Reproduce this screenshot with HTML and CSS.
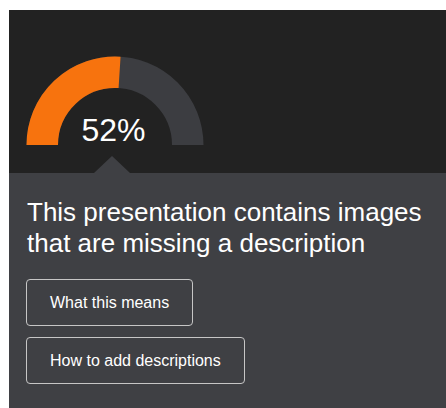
FILE: index.html
```html
<!DOCTYPE html>
<html lang="en">
<head>
<meta charset="utf-8">
<title>Accessibility check</title>
<link rel="stylesheet" href="styles.css">
</head>
<body>
  <div class="panel">
    <section class="score">
      <div class="gauge">
        <svg class="gauge-arc" width="178" height="89" viewBox="0 0 178 89" aria-hidden="true">
          <path d="M16.25 89 A72.75 72.75 0 0 1 161.75 89" fill="none" stroke="#3c3d41" stroke-width="31.5"/>
          <path d="M16.25 89 A72.75 72.75 0 0 1 93.57 16.39" fill="none" stroke="#f7730e" stroke-width="31.5"/>
        </svg>
        <span class="gauge-value">52%</span>
      </div>
      <span class="pointer"></span>
    </section>
    <section class="details">
      <h2 class="headline">This presentation contains images that are missing a description</h2>
      <div class="actions">
        <button class="action" type="button">What this means</button>
        <button class="action" type="button">How to add descriptions</button>
      </div>
    </section>
  </div>
</body>
</html>
```
FILE: styles.css
```css
html, body {
  margin: 0;
  padding: 0;
  background: #ffffff;
  overflow: hidden;
}

body {
  font-family: "Liberation Sans", Arial, sans-serif;
  color: #ffffff;
}

.panel {
  margin: 10px 0 0 9px;
}

/* Dark score area with the half-ring gauge */
.score {
  position: relative;
  box-sizing: border-box;
  height: 163px;
  padding: 46px 0 0 17px;
  background: #222222;
}

.gauge {
  position: relative;
  width: 178px;
  height: 89px;
}

.gauge-arc {
  display: block;
}

.gauge-value {
  position: absolute;
  top: 58px;
  left: 0;
  right: 3px;
  text-align: center;
  font-size: 32px;
  line-height: 32px;
  color: #ffffff;
}

/* Small arrow pointing from the details card up to the gauge */
.pointer {
  position: absolute;
  left: 85px;
  bottom: 0;
  width: 0;
  height: 0;
  border-left: 18px solid transparent;
  border-right: 18px solid transparent;
  border-bottom: 17px solid #3f4044;
}

/* Lower card with message and actions */
.details {
  box-sizing: border-box;
  min-height: 235px;
  padding: 24px 17px 22px 18px;
  background: #3f4044;
}

.headline {
  margin: 0;
  font-size: 26px;
  line-height: 31px;
  font-weight: normal;
  color: #ffffff;
}

.actions {
  display: flex;
  flex-direction: column;
  align-items: flex-start;
  gap: 11px;
  margin: 20px 0 0 -1px;
}

.action {
  box-sizing: border-box;
  height: 47px;
  padding: 0 23px;
  border: 1px solid #c6c6c6;
  border-radius: 4px;
  background: transparent;
  color: #ffffff;
  font-family: "Liberation Sans", Arial, sans-serif;
  font-size: 16px;
  cursor: pointer;
}
```
